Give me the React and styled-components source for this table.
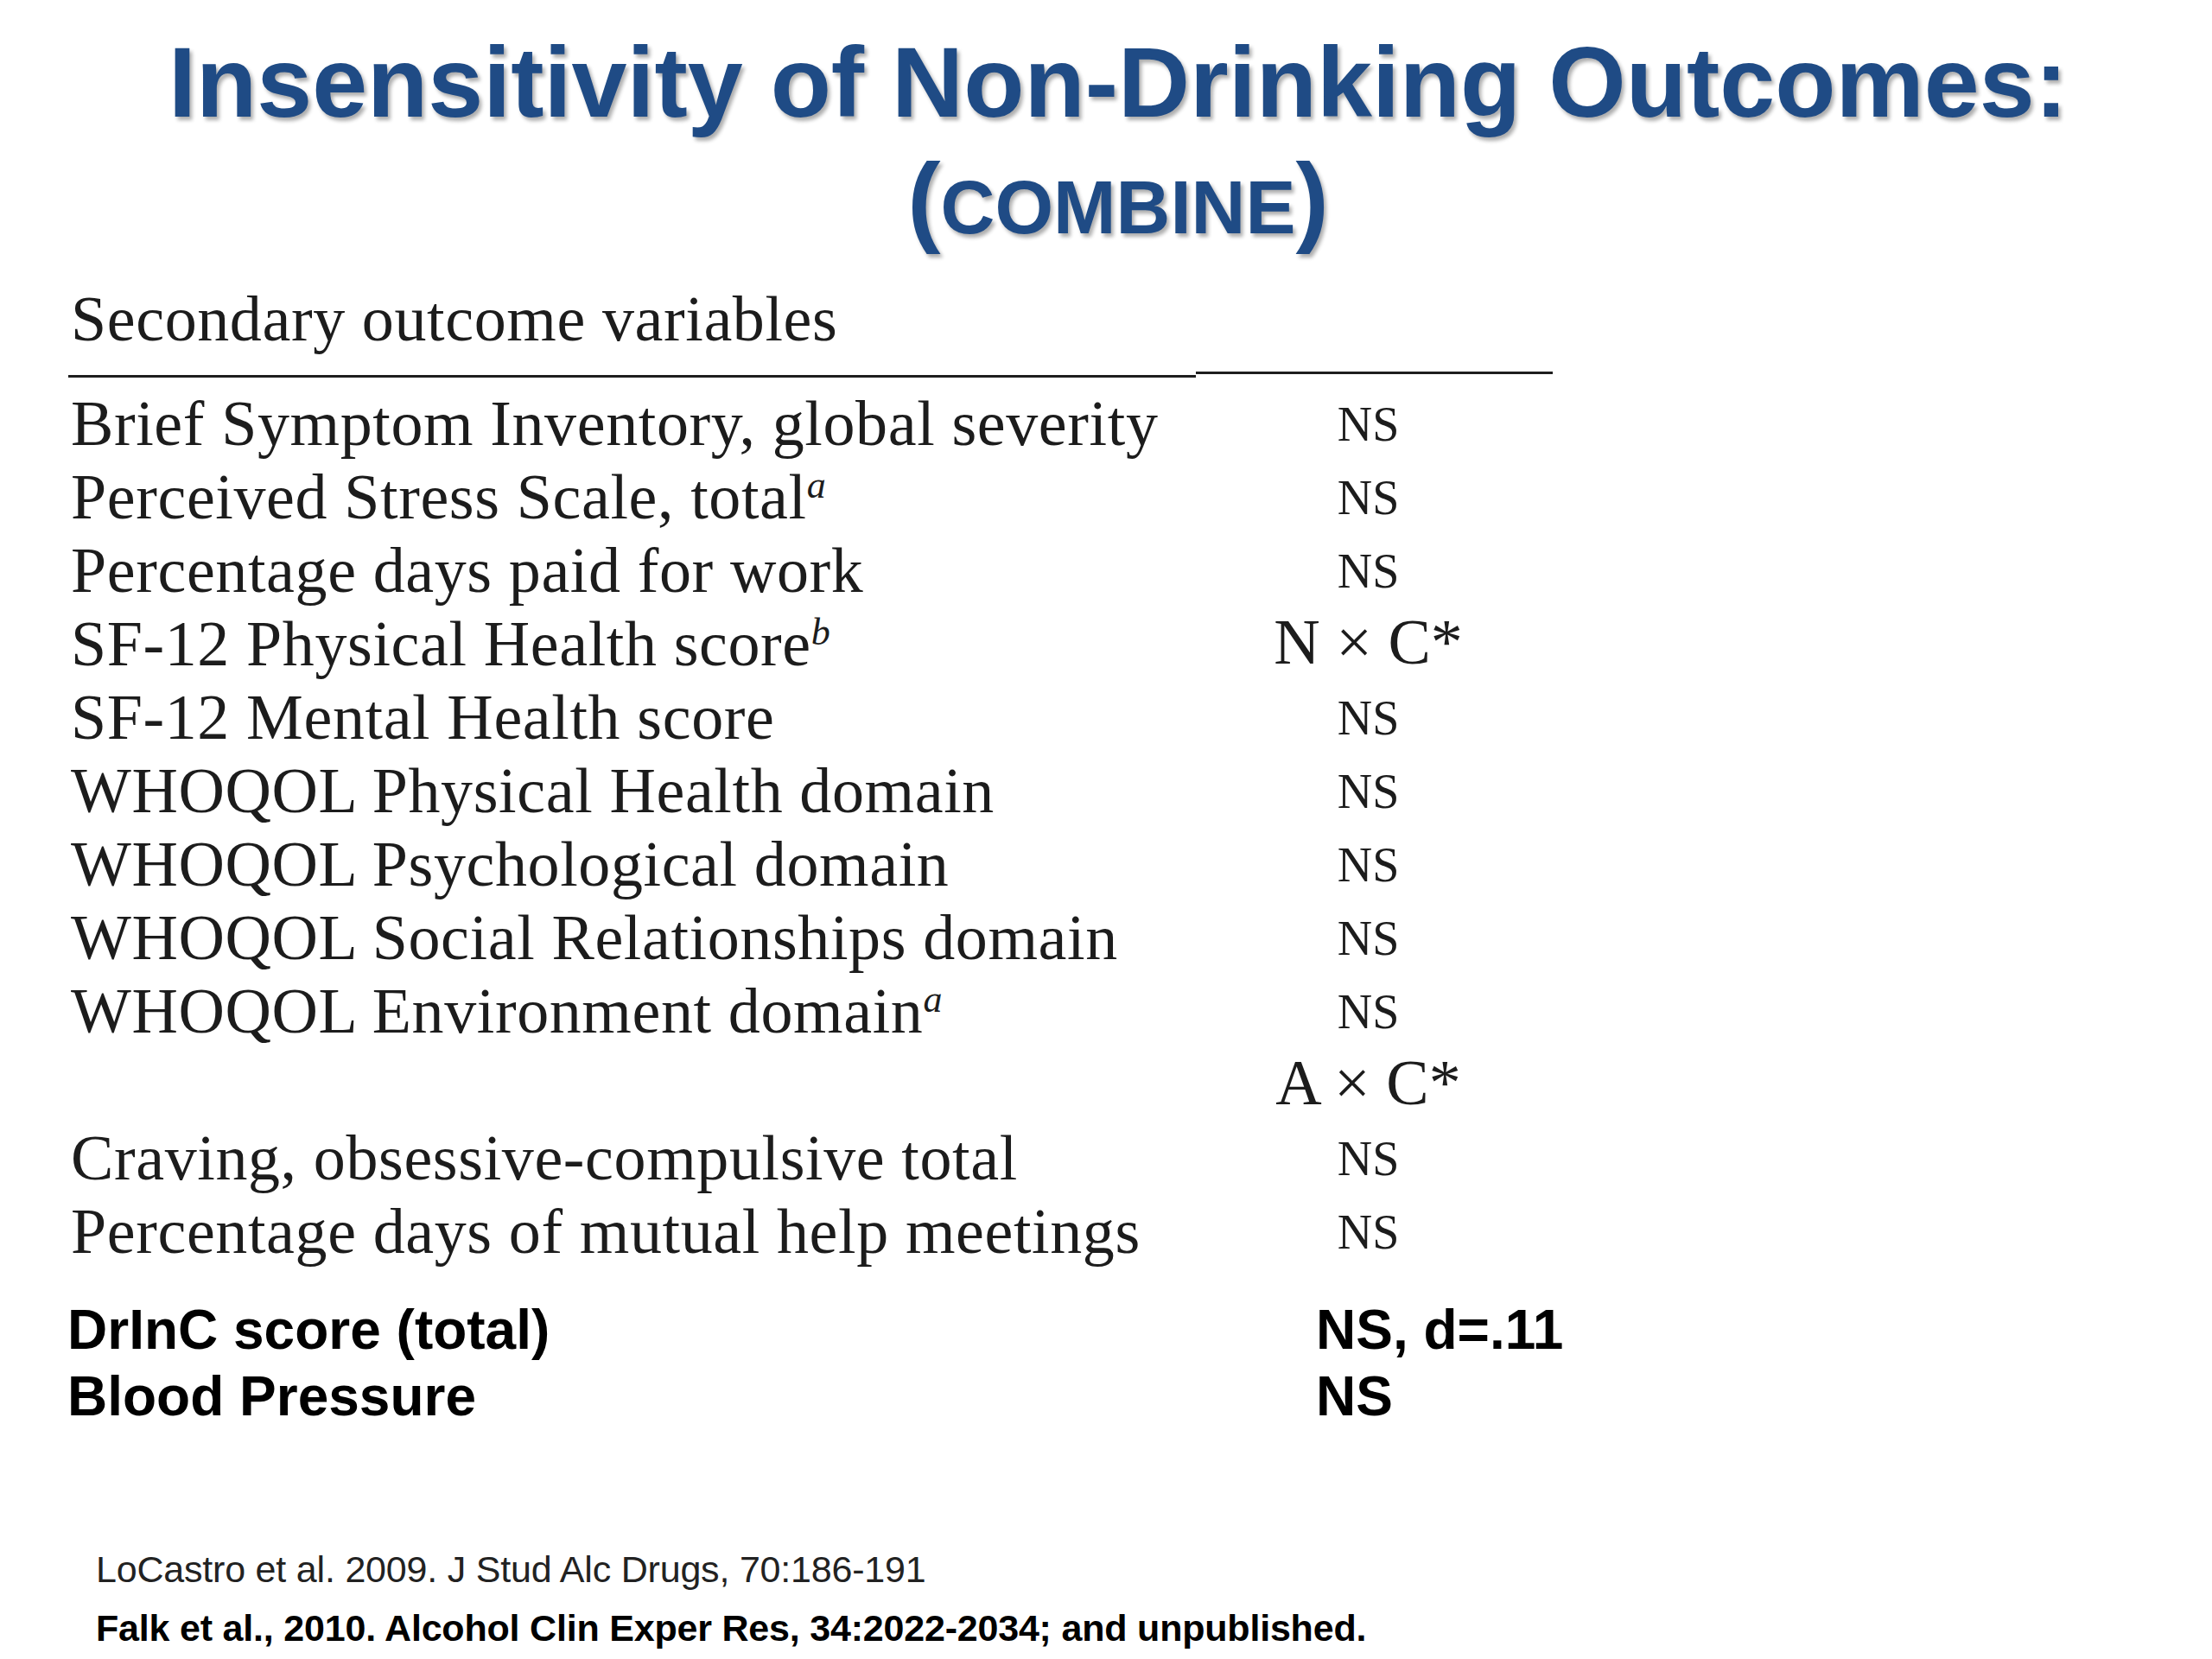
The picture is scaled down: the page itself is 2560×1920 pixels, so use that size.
import React from "react";
import styled, { createGlobalStyle } from "styled-components";

const GlobalStyle = createGlobalStyle`
  html, body { margin: 0; padding: 0; background: #ffffff; }
  body { font-family: "Liberation Sans", Arial, sans-serif; }
`;

const Slide = styled.div`
  width: 2560px;
  min-height: 1920px;
  background: #ffffff;
  display: flex;
  flex-direction: column;
  padding-left: 78px;
  box-sizing: border-box;
`;

const TitleBlock = styled.header`
  padding-top: 28px;
  padding-left: 28px;
  margin-left: -78px;
  width: 2560px;
  box-sizing: border-box;
  color: #1f4b85;
  font-family: "Liberation Sans", Arial, sans-serif;
  font-weight: 700;
  text-align: center;
  text-shadow: 3px 4px 4px rgba(0, 0, 0, 0.32);
`;

const TitleLine = styled.div`
  font-size: 115px;
  line-height: 135px;
  letter-spacing: 0;
  white-space: nowrap;
`;

const SmallCaps = styled.span`
  font-size: ${(p) => p.$size}px;
  line-height: 1;
`;

const Table = styled.section`
  margin-top: 29px;
  padding-left: 4px;
  font-family: "Liberation Serif", "Times New Roman", serif;
  color: #1c1c1c;
`;

const HeaderCell = styled.div`
  font-size: 74px;
  line-height: 85px;
  letter-spacing: 0.6px;
  white-space: nowrap;
`;

const Rule = styled.div`
  display: flex;
  align-items: flex-start;
  margin-top: 18px;
  margin-left: -3px;
`;

const RuleSegment = styled.div`
  width: ${(p) => p.$w}px;
  height: 3px;
  background: #1e1e1e;
  margin-top: ${(p) => p.$offset}px;
`;

const Rows = styled.div`
  margin-top: 11px;
  display: grid;
  grid-template-columns: 1302px 413px;
  grid-auto-rows: 85px;
  align-items: start;
`;

const Label = styled.div`
  font-size: 74px;
  line-height: 85px;
  letter-spacing: 0.6px;
  white-space: nowrap;
`;

const Value = styled.div`
  font-size: ${(p) => (p.$big ? 74 : 56)}px;
  line-height: ${(p) => (p.$big ? 81 : 87)}px;
  text-align: center;
  padding-right: 14px;
  white-space: nowrap;
`;

const Sup = styled.sup`
  font-style: italic;
  font-size: 44px;
  line-height: 0;
  vertical-align: 24px;
`;

const BoldBlock = styled.section`
  margin-top: 33px;
  display: grid;
  grid-template-columns: 1445px auto;
  font-family: "Liberation Sans", Arial, sans-serif;
  font-weight: 700;
  font-size: 64px;
  line-height: 77px;
  color: #000000;
  letter-spacing: 0;
`;

const BoldCell = styled.div`
  white-space: nowrap;
`;

const References = styled.footer`
  margin-top: 127px;
  padding-left: 33px;
  font-family: "Liberation Sans", Arial, sans-serif;
  font-size: 43px;
  line-height: 68px;
  letter-spacing: -0.2px;
`;

const RefLine = styled.div`
  white-space: nowrap;
  font-weight: ${(p) => (p.$bold ? 700 : 400)};
  color: ${(p) => (p.$bold ? "#000000" : "#222222")};
`;

const rows = [
  { label: "Brief Symptom Inventory, global severity", value: "NS" },
  { label: "Perceived Stress Scale, total", sup: "a", value: "NS" },
  { label: "Percentage days paid for work", value: "NS" },
  { label: "SF-12 Physical Health score", sup: "b", value: "N × C*", big: true },
  { label: "SF-12 Mental Health score", value: "NS" },
  { label: "WHOQOL Physical Health domain", value: "NS" },
  { label: "WHOQOL Psychological domain", value: "NS" },
  { label: "WHOQOL Social Relationships domain", value: "NS" },
  { label: "WHOQOL Environment domain", sup: "a", value: "NS" },
  { label: "\u00a0", value: "A × C*", big: true },
  { label: "Craving, obsessive-compulsive total", value: "NS" },
  { label: "Percentage days of mutual help meetings", value: "NS" },
];

export default function App() {
  return (
    <>
      <GlobalStyle />
      <Slide>
        <TitleBlock>
          <TitleLine>Insensitivity of Non-Drinking Outcomes:</TitleLine>
          <TitleLine>
            (<SmallCaps $size={87}>COMBINE</SmallCaps>)
          </TitleLine>
        </TitleBlock>

        <Table>
          <HeaderCell>Secondary outcome variables</HeaderCell>
          <Rule>
            <RuleSegment $w={1305} $offset={4} />
            <RuleSegment $w={413} $offset={0} />
          </Rule>
          <Rows>
            {rows.map((r, i) => (
              <React.Fragment key={i}>
                <Label>
                  {r.label}
                  {r.sup && <Sup>{r.sup}</Sup>}
                </Label>
                <Value $big={r.big}>{r.value}</Value>
              </React.Fragment>
            ))}
          </Rows>
        </Table>

        <BoldBlock>
          <BoldCell>DrInC score (total)</BoldCell>
          <BoldCell>NS, d=.11</BoldCell>
          <BoldCell>Blood Pressure</BoldCell>
          <BoldCell>NS</BoldCell>
        </BoldBlock>

        <References>
          <RefLine>LoCastro et al. 2009. J Stud Alc Drugs, 70:186-191</RefLine>
          <RefLine $bold>Falk et al., 2010. Alcohol Clin Exper Res, 34:2022-2034; and unpublished.</RefLine>
        </References>
      </Slide>
    </>
  );
}
